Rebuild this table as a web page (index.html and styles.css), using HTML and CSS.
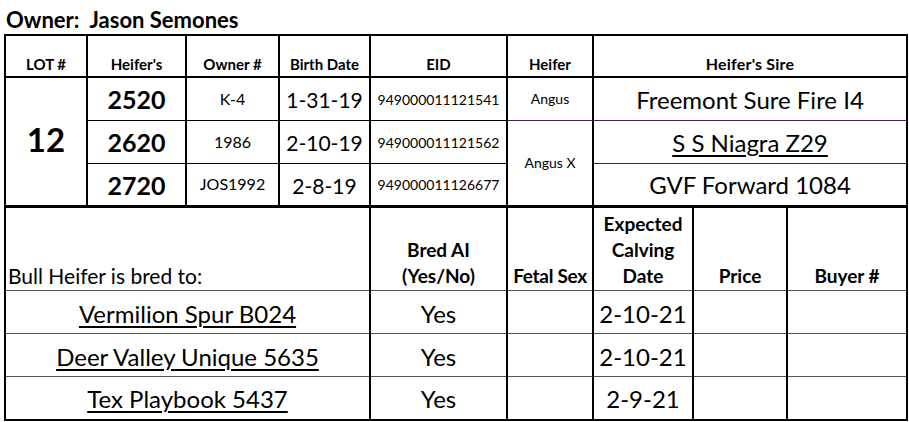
FILE: index.html
```html
<!DOCTYPE html>
<html lang="en">
<head>
<meta charset="utf-8">
<title>Lot 12 - Jason Semones</title>
<link rel="stylesheet" href="styles.css">
</head>
<body>
<div class="page">
  <h1 class="owner">Owner:&nbsp; Jason Semones</h1>
  <table class="lots">
    <colgroup>
      <col class="c-lot"><col class="c-heifer"><col class="c-owner"><col class="c-birth"><col class="c-eid"><col class="c-breed"><col class="c-sire">
    </colgroup>
    <thead>
      <tr class="hrow">
        <th>LOT #</th>
        <th>Heifer's</th>
        <th>Owner #</th>
        <th>Birth Date</th>
        <th>EID</th>
        <th>Heifer</th>
        <th class="sire-h">Heifer's Sire</th>
      </tr>
    </thead>
    <tbody>
      <tr class="drow">
        <td rowspan="3" class="lotno">12</td>
        <td class="tag">2520</td>
        <td class="own">K-4</td>
        <td class="date">1-31-19</td>
        <td class="eid">949000011121541</td>
        <td class="breed purple-b">Angus</td>
        <td class="sire purple-b">Freemont Sure Fire I4</td>
      </tr>
      <tr class="drow">
        <td class="tag">2620</td>
        <td class="own">1986</td>
        <td class="date">2-10-19</td>
        <td class="eid">949000011121562</td>
        <td rowspan="2" class="breed">Angus X</td>
        <td class="sire purple-b"><span class="ul">S S Niagra Z29</span></td>
      </tr>
      <tr class="drow">
        <td class="tag">2720</td>
        <td class="own">JOS1992</td>
        <td class="date">2-8-19</td>
        <td class="eid">949000011126677</td>
        <td class="sire">GVF Forward 1084</td>
      </tr>
    </tbody>
  </table>
  <table class="breeding">
    <colgroup>
      <col class="b-bull"><col class="b-ai"><col class="b-sex"><col class="b-calv"><col class="b-price"><col class="b-buyer">
    </colgroup>
    <thead>
      <tr class="bhrow">
        <th class="bull-h">Bull Heifer is bred to:</th>
        <th>Bred AI<br>(Yes/No)</th>
        <th class="tight">Fetal Sex</th>
        <th>Expected<br>Calving<br>Date</th>
        <th>Price</th>
        <th>Buyer #</th>
      </tr>
    </thead>
    <tbody>
      <tr class="brow">
        <td class="bull"><span class="ul">Vermilion Spur B024</span></td>
        <td class="big">Yes</td>
        <td></td>
        <td class="big">2-10-21</td>
        <td></td>
        <td></td>
      </tr>
      <tr class="brow">
        <td class="bull"><span class="ul">Deer Valley Unique 5635</span></td>
        <td class="big">Yes</td>
        <td></td>
        <td class="big">2-10-21</td>
        <td></td>
        <td></td>
      </tr>
      <tr class="brow">
        <td class="bull"><span class="ul">Tex Playbook 5437</span></td>
        <td class="big">Yes</td>
        <td></td>
        <td class="big">2-9-21</td>
        <td></td>
        <td></td>
      </tr>
    </tbody>
  </table>
</div>
</body>
</html>
```

FILE: styles.css
```css
html, body {
  margin: 0;
  padding: 0;
  background: #ffffff;
}

body {
  font-family: Lato, "Open Sans", "Liberation Sans", sans-serif;
  color: #000;
}

.page {
  padding-left: 4px;
  width: 904px;
}

.owner {
  margin: 0;
  height: 34px;
  box-sizing: border-box;
  padding: 9px 0 0 2px;
  font-size: 22px;
  line-height: 21px;
  font-weight: 700;
}

table {
  border-collapse: collapse;
  table-layout: fixed;
  width: 904px;
}

th, td {
  padding: 0;
  text-align: center;
  overflow: hidden;
  white-space: nowrap;
}

/* ---------- top table ---------- */
.lots {
  border: 2px solid #000;
  border-bottom-width: 3px;
}

.c-lot { width: 82px; }
.c-heifer { width: 99px; }
.c-owner { width: 93px; }
.c-birth { width: 91px; }
.c-eid { width: 137px; }
.c-breed { width: 86px; }
.c-sire { width: 314px; }

.lots th {
  border-left: 2px solid #000;
  border-right: 2px solid #000;
  border-bottom: 2px solid #000;
  vertical-align: bottom;
  padding-bottom: 4px;
  font-size: 15px;
  line-height: 16px;
  font-weight: 700;
}

.lots .sire-h {
  font-size: 16px;
  letter-spacing: 0.2px;
}

.lots .hrow { height: 42px; }
.lots .drow { height: 43px; }

.lots td {
  border-left: 2px solid #000;
  border-right: 2px solid #000;
  border-bottom: 1px solid #000;
  vertical-align: middle;
  line-height: 1;
}

.lots .lotno {
  font-size: 33px;
  font-weight: 700;
  border-bottom: none;
  padding-bottom: 4px;
}

.lots .tag {
  font-size: 25px;
  font-weight: 700;
  padding-top: 2px;
}

.lots .own {
  font-size: 16px;
}

.lots .date {
  font-size: 21px;
  padding-top: 2px;
}

.lots .eid {
  font-size: 14px;
  padding-top: 2px;
}

.lots .breed {
  font-size: 14px;
}

.lots .sire {
  font-size: 24px;
  padding-top: 2px;
}

.lots .purple-b {
  border-bottom: 1px solid #4a1d4c;
}

.lots tr:last-child td {
  border-bottom: none;
}

.ul {
  text-decoration: underline;
  text-decoration-thickness: 1.5px;
  text-underline-offset: 3px;
}

/* ---------- bottom table ---------- */
.breeding {
  border: 2px solid #000;
  border-top: none;
}

.b-bull { width: 365px; }
.b-ai { width: 137px; }
.b-sex { width: 86px; }
.b-calv { width: 100px; }
.b-price { width: 94px; }
.b-buyer { width: 120px; }

.breeding .bhrow { height: 83px; }
.breeding .brow { height: 43px; }

.breeding th {
  border-left: 2px solid #000;
  border-right: 2px solid #000;
  border-bottom: 1px solid #555;
  vertical-align: bottom;
  padding-bottom: 1px;
  font-size: 19px;
  line-height: 26px;
  font-weight: 700;
}

.breeding th.tight {
  letter-spacing: -0.3px;
}

.breeding .bull-h {
  text-align: left;
  font-weight: 400;
  font-size: 21px;
  padding-left: 2px;
}

.breeding td {
  border-left: 2px solid #000;
  border-right: 2px solid #000;
  border-bottom: 1px solid #555;
  vertical-align: middle;
  font-size: 24px;
  line-height: 1;
  padding-top: 3px;
}

.breeding tr:last-child td {
  border-bottom: 2px solid #000;
}
```
